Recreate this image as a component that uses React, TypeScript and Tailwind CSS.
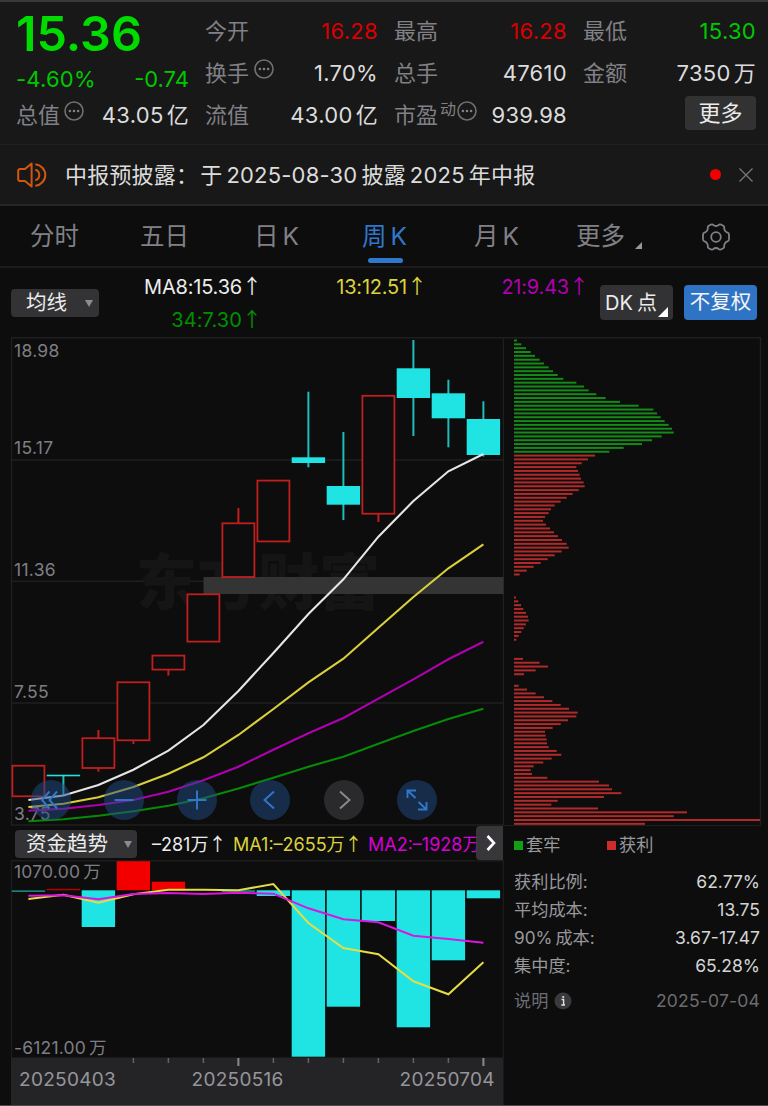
import React from 'react';
import clsx from 'clsx';

const UP = '#c01f1f';
const DOWN = '#20e3e3';

// x of every weekly bar
const xs = [28.4, 63.4, 98.4, 133.4, 168.4, 203.4, 238.4, 273.4, 308.4, 343.4, 378.4, 413.4, 448.4, 483.4];

// top / bottom of the body, then the wick's ends
const candles = [
    { up: true, top: 765.7, bottom: 796.3, high: 765.7, low: 796.3 },
    { up: false, top: 774.7, bottom: 776.3, high: 775, low: 795 },
    { up: true, top: 738.2, bottom: 768, high: 730, low: 771.7 },
    { up: true, top: 682.3, bottom: 740.3, high: 682.3, low: 744 },
    { up: true, top: 655.6, bottom: 669.6, high: 655.6, low: 675.6 },
    { up: true, top: 594.3, bottom: 641.6, high: 594.3, low: 641.6 },
    { up: true, top: 523.3, bottom: 577, high: 508, low: 577 },
    { up: true, top: 480.6, bottom: 541.4, high: 480.6, low: 541.4 },
    { up: false, top: 457.3, bottom: 463, high: 391.7, low: 467.3 },
    { up: false, top: 486, bottom: 504.7, high: 432, low: 520 },
    { up: true, top: 395.8, bottom: 513.7, high: 395.8, low: 522 },
    { up: false, top: 368.3, bottom: 398, high: 340, low: 436 },
    { up: false, top: 393.3, bottom: 418.3, high: 379.7, low: 447.3 },
    { up: false, top: 419, bottom: 455, high: 401.3, low: 456.5 },
];

const averages = [
    { color: '#e6e6e6', ys: [800, 795.5, 785, 769.7, 750.6, 725, 691, 653, 614, 579.3, 536.7, 501, 471.3, 454] },
    { color: '#d9cf3c', ys: [807, 803.7, 797.3, 787, 773.7, 757.3, 735, 709, 682.3, 658.7, 627.7, 597, 568.3, 544.3] },
    { color: '#b000b0', ys: [810.7, 808.7, 805, 800, 791.7, 780.3, 766.7, 749.7, 733.3, 718, 698.7, 679.3, 659.3, 641.7] },
    { color: '#078a07', ys: [821.3, 819.3, 815.7, 811.3, 805.7, 798.3, 788.5, 777.7, 766.7, 756.7, 743.7, 731, 719, 708.7] },
];

const priceLabels = [
    { text: '18.98', y: 357 },
    { text: '15.17', y: 454 },
    { text: '11.36', y: 575.7 },
    { text: '7.55', y: 697.7 },
    { text: '3.75', y: 819.5 },
];

const ZERO = 890.3;
const flows = [
    { y: 892, color: '#1b7f7f' },
    { y: 888.8, color: '#b30000' },
    { y: 927, color: DOWN },
    { y: 861.2, color: '#f20000' },
    { y: 881.7, color: '#f20000' },
    { y: 890.3, color: DOWN },
    { y: 891.8, color: '#1b9a9a' },
    { y: 896, color: DOWN },
    { y: 1056.7, color: DOWN },
    { y: 1006.7, color: DOWN },
    { y: 921, color: DOWN },
    { y: 1027.3, color: DOWN },
    { y: 960.3, color: DOWN },
    { y: 898.3, color: DOWN },
];

const flowAverages = [
    { color: '#e6dc46', ys: [899, 894.7, 902.7, 894.3, 889.7, 889.7, 890.3, 884, 923, 948, 954.3, 981.3, 994.3, 962.3] },
    { color: '#dd14dd', ys: [895.7, 895.3, 899.3, 894, 893, 894, 892.7, 893.7, 908.3, 919.3, 922.3, 935.7, 939, 942.7] },
];

// Chip distribution, one bar per price step, in thirds of a pixel
const trapped = [
    9, 22, 36, 50, 63, 77, 90, 104, 117, 131, 148, 187, 210, 224, 247, 275, 318, 374, 418, 429, 440, 452, 464, 474,
    479, 443, 414, 384, 329, 286,
];
const profit = [
    243, 222, 203, 187, 192, 197, 201, 209, 212, 194, 176, 158, 140, 122, 111, 104, 93, 87, 96, 108, 120, 132, 144,
    158, 164, 143, 122, 101, 80, 59, 38, 17, 0, 0, 0, 0, 0, 6, 13, 21, 28, 36, 42, 44, 36, 29, 22, 14, 7, 0, 0, 0, 0,
    27, 77, 102, 65, 30, 0, 0, 14, 39, 65, 90, 115, 140, 165, 191, 187, 162, 140, 116, 93, 95, 98, 99, 104, 128, 142,
    113, 88, 59, 50, 54, 100, 255, 285, 294, 322, 270, 131, 112, 252, 519, 479, 738, 393,
];

const tabs = ['分时', '五日', '日K', '周K', '月K', '更多'];

const costs = [
    { label: '获利比例:', value: '62.77%' },
    { label: '平均成本:', value: '13.75' },
    { label: '90%成本:', value: '3.67-17.47' },
    { label: '集中度:', value: '65.28%' },
];

const linePoints = (ys: number[]) => ys.map((y, i) => `${xs[i]},${y}`).join(' ');

const Dots: React.FC<{ className?: string }> = ({ className }) => (
    <svg viewBox="0 0 20 20" className={clsx('w-5 h-5 shrink-0', className)} fill="none" stroke="#707074">
        <circle cx="10" cy="10" r="9" strokeWidth="1.6" />
        <g fill="#808084" stroke="none">
            <circle cx="5.9" cy="10" r="1.3" />
            <circle cx="10" cy="10" r="1.3" />
            <circle cx="14.1" cy="10" r="1.3" />
        </g>
    </svg>
);

interface QuoteProps {
    label: string;
    value: string;
    unit?: string;
    color?: string;
    extra?: React.ReactNode;
}

const Quote: React.FC<QuoteProps> = ({ label, value, unit, color = 'text-[#dcdcdc]', extra }) => (
    <div className="h-[42px] flex items-center">
        <span className="text-[#808086] -ml-px -mt-px">{label}</span>
        {extra}
        <span className={clsx('ml-auto tracking-[0.3px]', color)}>
            {value}
            {unit && <span className="ml-[3px]">{unit}</span>}
        </span>
    </div>
);

const QuoteHeader: React.FC = () => (
    <div className="h-[144px] bg-[#181818] border-t-2 border-[#3a3a3a] pt-2 pl-[17px] pr-3 flex gap-[17px] text-[22px] leading-none">
        <div className="w-[172px]">
            <div className="h-12 flex items-center text-[48.5px] font-semibold -ml-px text-[#00dc00]">15.36</div>
            <div className="h-[42px] flex items-center justify-between text-[#00c800]">
                <span className="-ml-px tracking-[0.2px]">-4.60%</span>
                <span>-0.74</span>
            </div>
            <div className="h-[30px] flex items-center">
                <span className="text-[#808086] -ml-px -mt-px">总值</span>
                <Dots className="ml-1 mb-2" />
                <span className="ml-auto tracking-[0.3px] text-[#dcdcdc]">
                    43.05<span className="ml-[3px]">亿</span>
                </span>
            </div>
        </div>
        <div className="w-[172px]">
            <Quote label="今开" value="16.28" color="text-[#d80000]" />
            <Quote label="换手" value="1.70%" extra={<Dots className="ml-[5px] mb-2" />} />
            <Quote label="流值" value="43.00" unit="亿" />
        </div>
        <div className="w-[172px]">
            <Quote label="最高" value="16.28" color="text-[#d80000]" />
            <Quote label="总手" value="47610" />
            <Quote
                label="市盈"
                value="939.98"
                extra={
                    <>
                        <span className="text-[16px] text-[#808086] ml-[2px] mb-[13px]">动</span>
                        <Dots className="ml-px mb-2" />
                    </>
                }
            />
        </div>
        <div className="w-[172px]">
            <Quote label="最低" value="15.30" color="text-[#00c800]" />
            <Quote label="金额" value="7350" unit="万" />
            <button className="ml-auto mt-0.5 w-[71px] h-[34px] rounded bg-[#323232] text-[#ececec] flex items-center justify-center">
                更多
            </button>
        </div>
    </div>
);

const Notice: React.FC = () => (
    <div className="h-[62px] bg-[#181818] border-t border-[#202020] border-b-2 border-b-[#262626] flex items-center pl-[17px] pr-[15px] text-[22px] leading-none tracking-[0.2px] text-[#dcdcdc]">
        <svg viewBox="0 0 30 26" className="w-[30px] h-[26px] mr-[19px]" fill="none" stroke="#d2560f" strokeWidth="2" strokeLinejoin="round">
            <path d="M14.6 1.5 8 7H2.5L1.2 8.3v9.4L2.5 19H8l6.6 5.5z" />
            <path d="M18.3 7.8c2.6.7 4 2.600 4 5.200s-1.400 4.500-4 5.200" />
            <path d="M18.3 2.200c5.600.8 10 5.200 10 10.800s-4.400 10-10 10.800" />
        </svg>
        <span className="-ml-px">中报预披露：</span>
        <span className="ml-[2px]">于</span>
        <span className="ml-[4px]">2025-08-30</span>
        <span className="ml-[4px]">披露</span>
        <span className="ml-[4px]">2025</span>
        <span className="ml-[4px]">年中报</span>
        <span className="ml-auto w-[11px] h-[11px] rounded-full bg-[#f00000]" />
        <svg viewBox="0 0 14 14" className="w-[14px] h-[14px] ml-[18px]" stroke="#77777b" strokeWidth="1.3">
            <path d="M.5.5l13 13M13.500.5l-13 13" />
        </svg>
    </div>
);

const Tabs: React.FC = () => (
    <div className="h-[62px] border-b-2 border-[#1c1c1c] grid grid-cols-[110px_114px_108px_112px_102px_125px_auto] items-center pl-[30px] text-[24.5px] leading-none text-[#808086]">
        {tabs.map((tab) => (
            <div key={tab} className="relative h-full flex items-center pt-px">
                <span className={clsx(tab === '周K' && 'text-[#2f78cc]')}>
                    {tab.replace('K', '')}
                    {tab.endsWith('K') && <span className="ml-[4px]">K</span>}
                </span>
                {tab === '周K' && <span className="absolute left-[6px] bottom-[3px] w-[35px] h-[5px] rounded-full bg-[#2f78cc]" />}
                {tab === '更多' && (
                    <svg viewBox="0 0 7 7" className="w-[7px] h-[7px] ml-[10px] mt-[18px]" fill="#98989c">
                        <path d="M7 0v7H0z" />
                    </svg>
                )}
            </div>
        ))}
        <svg viewBox="0 0 28 28" className="w-7 h-7 ml-[1px] mt-px" fill="none" stroke="#808086" strokeWidth="1.8" strokeLinejoin="round">
            <path d="M9.200 1.500q1.200-.5 2 .3 1.200 1.200 2.800 1.200t2.800-1.200q.8-.8 2-.3l2.500 1.300q1 .6.900 1.800-.1 1.900.8 3.200t2.500 1.800q1.200.4 1.400 1.500.3 2.900 0 5.800-.2 1.100-1.400 1.500-1.600.5-2.500 1.800t-.8 3.200q.1 1.200-.9 1.800l-2.500 1.300q-1.200.5-2-.3-1.200-1.200-2.800-1.200t-2.800 1.200q-.8.8-2 .3l-2.500-1.300q-1-.6-.9-1.800.1-1.900-.8-3.200T2.500 18.400Q1.300 18 1.100 16.900q-.3-2.900 0-5.800.2-1.100 1.400-1.500 1.600-.5 2.500-1.800t.8-3.200q-.1-1.200.9-1.800z" />
            <circle cx="14" cy="14" r="4.800" />
        </svg>
    </div>
);

const Arrow: React.FC = () => <span className="inline-block w-[16px] ml-px [font-family:'Noto_Sans_CJK_SC'] [text-indent:-1px]">↑</span>;

const AverageBar: React.FC = () => (
    <div className="h-[69px] flex pl-[11px] pr-[11px] text-[20px] leading-none">
        <button className="w-[88px] h-[28px] mt-[21px] rounded bg-[#333335] text-[#ececec] text-[20.5px] flex items-center pl-[15px]">
            均线
            <svg viewBox="0 0 8 7" className="w-[8px] h-[7px] ml-auto mr-[6px]" fill="#8c8c90">
                <path d="M0 0h8L4 7z" />
            </svg>
        </button>
        <div className="grid grid-cols-[160px_165px_162px] grid-rows-[33px_33px] items-center justify-items-end mt-[2px] tracking-[-0.2px] whitespace-nowrap">
            <span className="text-[#ececec]">MA8:15.36<Arrow /></span>
            <span className="text-[#dcd23c]">13:12.51<Arrow /></span>
            <span className="text-[#b400b4]">21:9.43<Arrow /></span>
            <span className="text-[#009000] tracking-[0.1px]">34:7.30<Arrow /></span>
        </div>
        <button className="relative ml-auto w-[73px] h-[35px] mt-[17px] rounded bg-[#323234] text-[#ececec] flex items-center pl-[5px]">
            DK<span className="ml-[4px]">点</span>
            <svg viewBox="0 0 10 10" className="absolute right-[5px] bottom-[3px] w-[10px] h-[10px]" fill="#ffffff">
                <path d="M10 0v10H0z" />
            </svg>
        </button>
        <button className="w-[73px] h-[35px] mt-[17px] ml-[11px] rounded bg-[#2f74c4] text-[#f4f4f4] text-[20.5px] flex items-center justify-center whitespace-nowrap">
            不复权
        </button>
    </div>
);

const controls = [
    { name: 'first', d: 'M18.500 11.500 11 20l7.500 8.500M26 11.500 18.500 20l7.500 8.500' },
    { name: 'minus', d: 'M10.500 20h19' },
    { name: 'plus', d: 'M10.500 20h19M20 10.500v19' },
    { name: 'prev', d: 'M24 11.500 14.500 20l9.500 8.500' },
    { name: 'next', d: 'M16 11.500 25.500 20 16 28.500', muted: true },
    { name: 'expand', d: 'M10.500 18v-7.500h8.500M10.500 10.500l8 7.500M29.500 22v7.500h-8.500M29.500 29.500l-8-7.500' },
];

const PriceChart: React.FC = () => (
    <div className="relative h-[489px]">
        <svg viewBox="0 337 504 489" className="w-[504px] h-[489px] block">
            <g stroke="#1f1f20" strokeWidth="1.5">
                {[337.7, 460, 581.3, 703, 825].map((y) => (
                    <path key={y} d={`M11 ${y}H504`} />
                ))}
                <path d="M11.500 337V826M503.500 337V826" />
            </g>
            <text x="136" y="605" fontSize="61" fontWeight="900" fill="#151516">东方财富</text>
            <rect x="203.500" y="577" width="300" height="17" fill="#343434" />
            {candles.map((c, i) =>
                c.up ? (
                    <g key={i} stroke={UP} strokeWidth="1.8">
                        <rect x={xs[i] - 16} y={c.top} width="32" height={c.bottom - c.top} fill="#0d0d0d" />
                        <path d={`M${xs[i]} ${c.high}V${c.top}M${xs[i]} ${c.bottom}V${c.low}`} strokeWidth="2" />
                    </g>
                ) : (
                    <g key={i} fill={DOWN}>
                        <path d={`M${xs[i]} ${c.high}V${c.low}`} stroke="#1fbcbc" strokeWidth="2" />
                        <rect x={xs[i] - 16.7} y={c.top} width="33.4" height={c.bottom - c.top} />
                    </g>
                )
            )}
            {priceLabels.map((p) => (
                <text key={p.text} x="14" y={p.y} fontSize="17.500" letterSpacing="0.3" fill="#7e7e84">
                    {p.text}
                </text>
            ))}
            {averages.map((a) => (
                <polyline key={a.color} points={linePoints(a.ys)} fill="none" stroke={a.color} strokeWidth="2.1" />
            ))}
        </svg>
        <div className="absolute left-[30.5px] top-[443px] flex gap-[33.3px]">
            {controls.map((c) => (
                <button key={c.name} aria-label={c.name} className={clsx('w-10 h-10 rounded-full', c.muted ? 'bg-[#2a2a2d]' : 'bg-[#1f4c83]/50')}>
                    <svg viewBox="0 0 40 40" className="w-10 h-10" fill="none" stroke={c.muted ? '#8a8a8e' : '#2f78cc'} strokeWidth="1.900">
                        <path d={c.d} />
                    </svg>
                </button>
            ))}
        </div>
    </div>
);

const FlowBar: React.FC = () => (
    <div className="relative h-[34px] w-[503px] overflow-hidden flex items-center pl-[15px] text-[18px] leading-none whitespace-nowrap">
        <button className="w-[122px] h-[28px] shrink-0 rounded bg-[#333335] text-[#ececec] text-[20.500px] flex items-center pl-[11px] mt-[2px]">
            资金趋势
            <svg viewBox="0 0 8 7" className="w-[8px] h-[7px] ml-auto mr-[5px]" fill="#8c8c90">
                <path d="M0 0h8L4 7z" />
            </svg>
        </button>
        <span className="ml-[15px] mt-0.5 w-[81px] shrink-0 text-[#ececec]">–281万<Arrow /></span>
        <span className="mt-0.5 w-[135px] shrink-0 text-[#dcd23c]">MA1:–2655万<Arrow /></span>
        <span className="mt-0.5 shrink-0 text-[#d800d8]">MA2:–1928万<Arrow /></span>
        <div className="absolute right-0 top-0 w-[27px] h-[34px] rounded-l bg-[#3c3c3f]/90 flex items-center justify-center">
            <svg viewBox="0 0 10 16" className="w-[10px] h-[16px] ml-[3px]" fill="none" stroke="#ffffff" strokeWidth="2.600">
                <path d="M1.500 1 8 8l-6.500 7" />
            </svg>
        </div>
    </div>
);

const FlowChart: React.FC = () => (
    <svg viewBox="0 860 504 246" className="w-[504px] h-[246px] block">
        <path d="M11 860.700H503.500V1058M11.500 860V1058" fill="none" stroke="#1c1c1d" strokeWidth="1.500" />
        {flows.map((f, i) => (
            <rect key={i} x={xs[i] - 16.7} y={Math.min(f.y, ZERO)} width="33.4" height={Math.abs(f.y - ZERO)} fill={f.color} />
        ))}
        <g fontSize="17.500" fill="#7e7e84" letterSpacing="0.2">
            <text x="14" y="878">1070.00<tspan dx="3">万</tspan></text>
            <text x="14" y="1053.600">-6121.00<tspan dx="3">万</tspan></text>
        </g>
        {flowAverages.map((a) => (
            <polyline key={a.color} points={linePoints(a.ys)} fill="none" stroke={a.color} strokeWidth="2" />
        ))}
        <rect x="11" y="1057.500" width="492.500" height="48.500" fill="#242427" />
        {xs.slice(3).map((x, i) => {
            const major = i === 3 || i === 10;
            return <path key={x} d={`M${x} 1058V${major ? 1066 : 1063}`} stroke={major ? '#8a8a8e' : '#646468'} strokeWidth={major ? 2 : 1.5} />;
        })}
        <g fontSize="19" fill="#96969a" letterSpacing="0.3">
            <text x="19" y="1085.500">20250403</text>
            <text x="191.500" y="1085.500">20250516</text>
            <text x="399.500" y="1085.500">20250704</text>
        </g>
    </svg>
);

const ChipChart: React.FC = () => (
    <svg viewBox="504 337 264 489" className="w-[264px] h-[489px] block">
        <path d="M504 337.700H760.500V825.700H504" fill="none" stroke="#1f1f20" strokeWidth="1.500" />
        {[...trapped, ...profit].map((w, i) => (
            <rect key={i} x="514" y={339.5 + i * 3.836} width={w / 3} height="2" fill={i < trapped.length ? '#148a17' : '#b02a2a'} />
        ))}
    </svg>
);

const ChipInfo: React.FC = () => (
    <div className="pl-[10px] pr-[8px] text-[17.2px] leading-none text-[#98989c]">
        <div className="h-[38px] flex items-center">
            <span className="w-[9px] h-[9px] bg-[#12a012]" />
            <span className="ml-[3px] w-[81px]">套牢</span>
            <span className="w-[9px] h-[9px] bg-[#cc2c2c]" />
            <span className="ml-[3px]">获利</span>
        </div>
        <div className="pt-[4px]">
            {costs.map((c) => (
                <div key={c.label} className="h-[28px] flex items-center justify-between">
                    <span>
                        {c.label.startsWith('90%') ? (
                            <>
                                90%<span className="ml-[3px]">成本:</span>
                            </>
                        ) : (
                            c.label
                        )}
                    </span>
                    <span className="text-[#d4d4d4] text-[17.500px]">{c.value}</span>
                </div>
            ))}
        </div>
        <div className="mt-[6px] h-[30px] flex items-center text-[#6c6c70]">
            <span>说明</span>
            <svg viewBox="0 0 18 18" className="w-[18px] h-[18px] ml-[6px]">
                <circle cx="9" cy="9" r="8.500" fill="#3a3a3c" />
                <path d="M7.500 7.500H9.600V13M7.300 13H11" stroke="#e0e0e0" strokeWidth="1.400" fill="none" />
                <circle cx="9.200" cy="5" r="1.100" fill="#e0e0e0" />
            </svg>
            <span className="ml-auto text-[17.500px] tracking-[0.2px]">2025-07-04</span>
        </div>
    </div>
);

const App: React.FC = () => {
    return (
        <div className="w-[768px] h-[1106px] overflow-hidden bg-[#0d0d0d] border-b border-[#4a4a4c] [font-family:Inter,'Noto_Sans_CJK_SC',sans-serif]">
            <QuoteHeader />
            <Notice />
            <Tabs />
            <AverageBar />
            <div className="flex">
                <div className="w-[504px]">
                    <PriceChart />
                    <FlowBar />
                    <FlowChart />
                </div>
                <div className="w-[264px]">
                    <ChipChart />
                    <ChipInfo />
                </div>
            </div>
        </div>
    );
};

export default App;
